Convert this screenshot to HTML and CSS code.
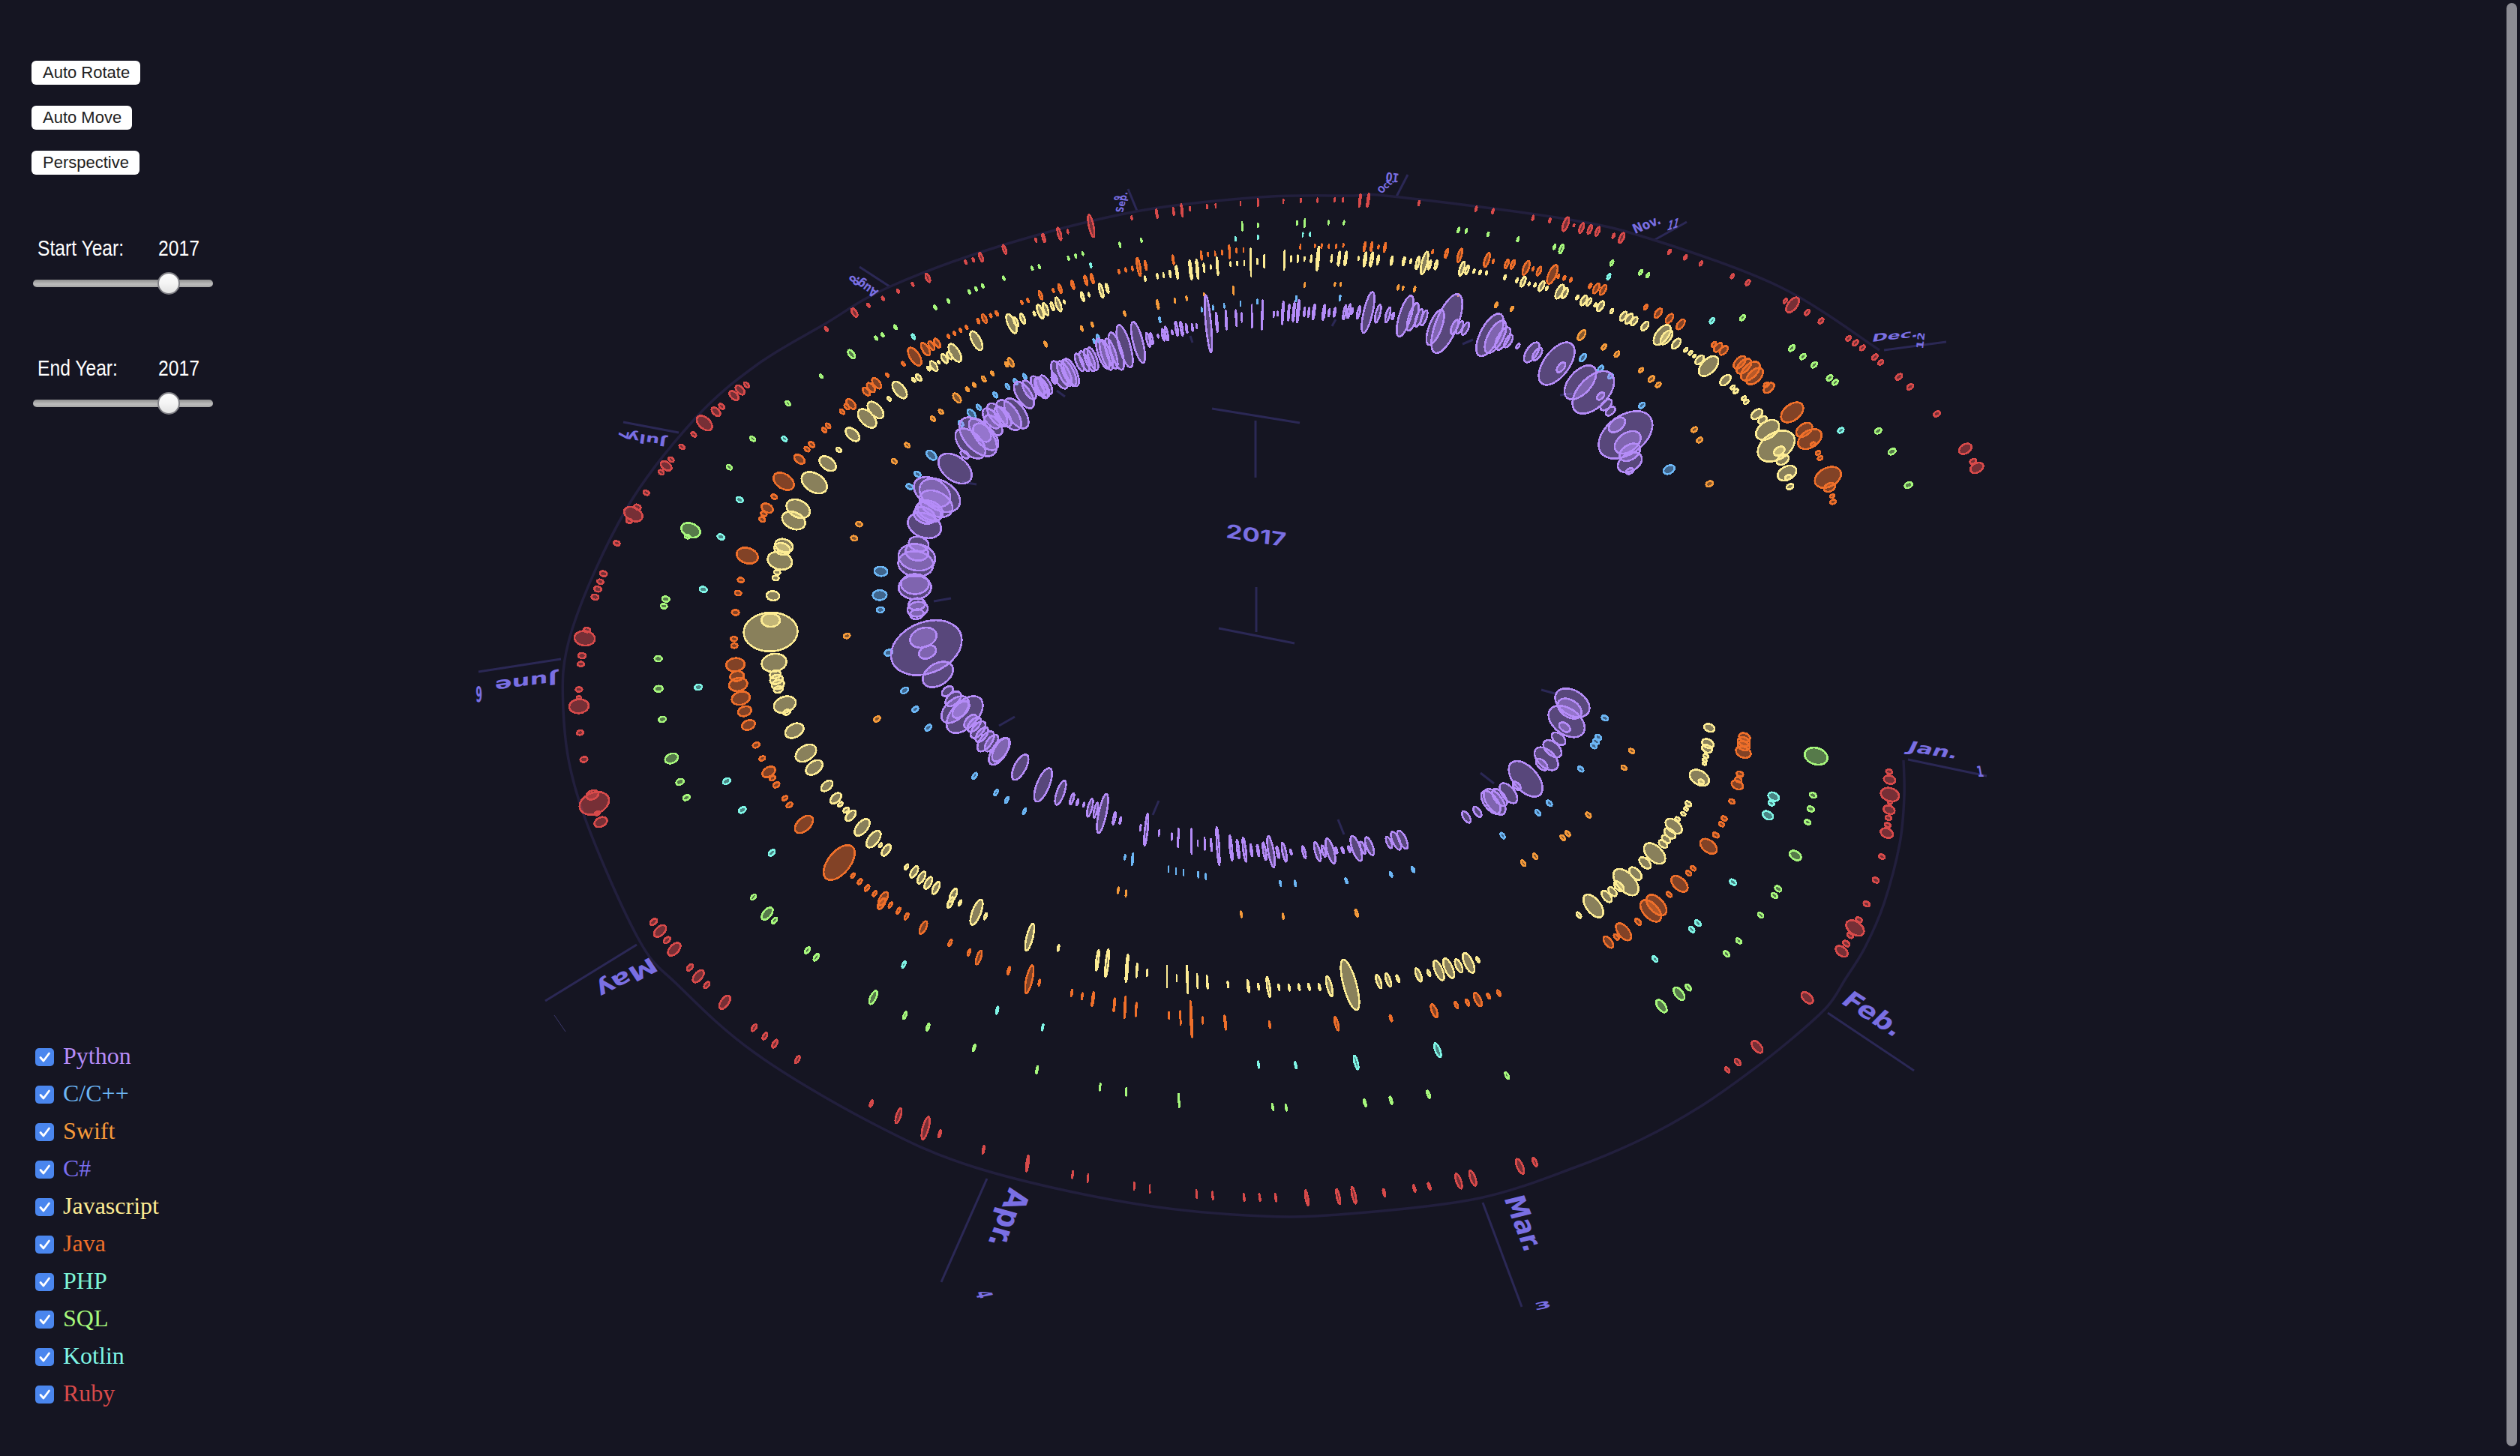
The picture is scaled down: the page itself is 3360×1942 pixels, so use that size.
FILE: index.html
```html
<!DOCTYPE html>
<html lang="en">
<head>
<meta charset="utf-8">
<title>Language activity 2017</title>
<link rel="stylesheet" href="styles.css">
</head>
<body>
<svg id="chart" class="chart" width="3360" height="1942" viewBox="0 0 3360 1942">
  <g class="ticks">
    <line x1="2544" y1="1013" x2="2649" y2="1035"/>
    <line x1="2437" y1="1351" x2="2552" y2="1428"/>
    <line x1="1977" y1="1604" x2="2029" y2="1743"/>
    <line x1="1316" y1="1572" x2="1255" y2="1710"/>
    <line x1="849" y1="1260" x2="727" y2="1335"/>
    <line x1="748" y1="879" x2="638" y2="896"/>
    <line x1="905" y1="577" x2="831" y2="563"/>
    <line x1="1186" y1="382" x2="1146" y2="356"/>
    <line x1="1516" y1="281" x2="1504" y2="252"/>
    <line x1="1862" y1="262" x2="1877" y2="233"/>
    <line x1="2206" y1="320" x2="2249" y2="296"/>
    <line x1="2512" y1="467" x2="2595" y2="456"/>
    <line x1="1616" y1="545" x2="1733" y2="564"/>
    <line x1="1674" y1="561" x2="1674" y2="637"/>
    <line x1="1675" y1="783" x2="1675" y2="843"/>
    <line x1="1625" y1="838" x2="1726" y2="858"/>
    <line x1="1587" y1="448" x2="1590" y2="457"/>
    <line x1="1409" y1="521" x2="1420" y2="529"/>
    <line x1="1781" y1="426" x2="1776" y2="435"/>
    <line x1="1950" y1="459" x2="1964" y2="453"/>
    <line x1="2080" y1="527" x2="2096" y2="525"/>
    <line x1="1283" y1="643" x2="1302" y2="646"/>
    <line x1="1245" y1="802" x2="1268" y2="798"/>
    <line x1="1332" y1="968" x2="1353" y2="956"/>
    <line x1="2055" y1="920" x2="2073" y2="925"/>
    <line x1="1974" y1="1031" x2="1992" y2="1045"/>
    <line x1="1545" y1="1068" x2="1537" y2="1087"/>
    <line x1="1784" y1="1093" x2="1792" y2="1113"/>
  </g>
  <line class="tick-edge" x1="739" y1="1354" x2="754" y2="1376"/>
  <path id="ring" class="ring" d=""/>
  <g id="blobs"></g>
  <g class="labels">
    <text class="month" transform="matrix(1.71,.26,-.5,1.07,2542,1002)">Jan.</text>
    <text class="month" transform="matrix(1.68,1.08,-1.3,1.3,2453,1337)">Feb.</text>
    <text class="month" transform="matrix(.655,1.7,-2,.5,2005,1598)">Mar.</text>
    <text class="month" transform="matrix(-.73,1.9,-2.2,-.6,1346,1583)">Apr.</text>
    <text class="month" transform="matrix(-1.85,.95,-.9,-1.35,868,1276)">May</text>
    <text class="month" transform="matrix(-1.87,.25,0,-1.2,743,897)">June</text>
    <text class="month" transform="matrix(-1.4,-.2,.13,-.9,889,584)">July</text>
    <text class="month" transform="matrix(-.62,-.42,.55,-.75,1172,388)">Aug.</text>
    <text class="month" transform="matrix(.15,-.62,.75,.1,1497,284)">Sep.</text>
    <text class="month" transform="matrix(.43,-.41,.5,.5,1842,259)">Oct.</text>
    <text class="month" transform="matrix(.8,-.32,.4,.9,2180,312)">Nov.</text>
    <text class="month" transform="matrix(1.39,-.16,-.2,.8,2495,456)">Dec.</text>
    <text class="month" transform="matrix(.7,0,.2,1.1,2637,1036)">1</text>
    <text class="month" transform="matrix(1.8,-.4,.2,.7,2047,1748)">3</text>
    <text class="month" transform="matrix(.3,.7,-1.6,.3,1300,1724)">4</text>
    <text class="month" transform="matrix(-.7,-.1,0,-1.6,643,916)">6</text>
    <text class="month" transform="matrix(-.2,.9,-1,-.1,826,574)">7</text>
    <text class="month" transform="matrix(-.6,.45,-.7,-.8,1138,366)">8</text>
    <text class="month" transform="matrix(.25,-.5,.75,.1,1494,268)">9</text>
    <text class="month" transform="matrix(-.7,-.1,.1,-.9,1866,232)">10</text>
    <text class="month" transform="matrix(.6,-.2,-.25,1,2222,308)">11</text>
    <text class="month" transform="matrix(.1,-.9,.7,.1,2564,466)">12</text>
    <text class="month year" transform="matrix(1.92,.3,-.12,1.42,1634,717)">2017</text>
  </g>
</svg>

<main class="panel">
  <div class="buttons">
    <button class="btn" type="button">Auto Rotate</button>
    <button class="btn" type="button">Auto Move</button>
    <button class="btn" type="button">Perspective</button>
  </div>

  <div class="sliders">
    <div class="slider-block">
      <div class="slider-row"><span class="slider-label"><span class="narrow">Start Year:</span></span><span class="narrow">2017</span></div>
      <input class="range" type="range" min="2001" max="2020" value="2016" aria-label="Start Year">
    </div>
    <div class="slider-block">
      <div class="slider-row"><span class="slider-label"><span class="narrow">End Year:</span></span><span class="narrow">2017</span></div>
      <input class="range" type="range" min="2001" max="2020" value="2016" aria-label="End Year">
    </div>
  </div>

  <ul class="legend">
    <li class="item c-py"><span class="check"><svg viewBox="0 0 24 24" class="tick"><path d="M6.5 12.5l4 4.5 7.5-10"/></svg></span>Python</li>
    <li class="item c-cc"><span class="check"><svg viewBox="0 0 24 24" class="tick"><path d="M6.5 12.5l4 4.5 7.5-10"/></svg></span>C/C++</li>
    <li class="item c-sw"><span class="check"><svg viewBox="0 0 24 24" class="tick"><path d="M6.5 12.5l4 4.5 7.5-10"/></svg></span>Swift</li>
    <li class="item c-cs"><span class="check"><svg viewBox="0 0 24 24" class="tick"><path d="M6.5 12.5l4 4.5 7.5-10"/></svg></span>C#</li>
    <li class="item c-js"><span class="check"><svg viewBox="0 0 24 24" class="tick"><path d="M6.5 12.5l4 4.5 7.5-10"/></svg></span>Javascript</li>
    <li class="item c-ja"><span class="check"><svg viewBox="0 0 24 24" class="tick"><path d="M6.5 12.5l4 4.5 7.5-10"/></svg></span>Java</li>
    <li class="item c-ph"><span class="check"><svg viewBox="0 0 24 24" class="tick"><path d="M6.5 12.5l4 4.5 7.5-10"/></svg></span>PHP</li>
    <li class="item c-sq"><span class="check"><svg viewBox="0 0 24 24" class="tick"><path d="M6.5 12.5l4 4.5 7.5-10"/></svg></span>SQL</li>
    <li class="item c-ko"><span class="check"><svg viewBox="0 0 24 24" class="tick"><path d="M6.5 12.5l4 4.5 7.5-10"/></svg></span>Kotlin</li>
    <li class="item c-ru"><span class="check"><svg viewBox="0 0 24 24" class="tick"><path d="M6.5 12.5l4 4.5 7.5-10"/></svg></span>Ruby</li>
  </ul>
</main>
<div class="scrollbar"></div>
<script src="chart.js"></script>
</body>
</html>
```
FILE: styles.css
```css
* { box-sizing: border-box; }
html, body { margin: 0; height: 100%; }
body {
  width: 3360px;
  height: 1942px;
  overflow: hidden;
  background: #151522;
  position: relative;
}
.chart { position: absolute; left: 0; top: 0; }
.ticks line { stroke: #2b2855; stroke-width: 3; }
.tick-edge { stroke: #3a3768; stroke-width: 1; }
.ring { fill: none; stroke: #221f3d; stroke-width: 3.5; }
.month {
  font-family: "DejaVu Sans", sans-serif;
  font-weight: 700;
  font-size: 18px;
  fill: #7a6fe3;
}
.year { font-family: "Inter", "DejaVu Sans", sans-serif; }
.blob {
  shape-rendering: crispEdges;
  vector-effect: non-scaling-stroke;
  stroke-width: 2.6;
}
.s-py { stroke: #b58cf8; fill: rgba(181, 140, 248, .42); }
.s-cc { stroke: #6cb6f5; fill: rgba(108, 182, 245, .5); }
.s-sw { stroke: #f59a3a; fill: rgba(245, 154, 58, .5); }
.s-js { stroke: #fdec94; fill: rgba(253, 236, 148, .5); }
.s-ja { stroke: #ef6f2a; fill: rgba(239, 111, 42, .5); }
.s-ko { stroke: #7ff5e6; fill: rgba(127, 245, 230, .5); }
.s-sq { stroke: #a6f77c; fill: rgba(166, 247, 124, .45); }
.s-ru { stroke: #d84a4a; fill: rgba(216, 74, 74, .5); }

.panel {
  position: relative;
  width: 320px;
  height: 1942px;
  display: flex;
  flex-direction: column;
  padding: 81px 0 0 42px;
}
.buttons {
  display: flex;
  flex-direction: column;
  align-items: flex-start;
  gap: 28px;
}
.btn {
  height: 32px;
  padding: 0 14px 0 15px;
  border: 0;
  border-radius: 6px;
  background: #fff;
  color: #222;
  font: 22px/32px "Liberation Sans", Arial, sans-serif;
}
.sliders {
  margin-top: 78px;
  display: flex;
  flex-direction: column;
  gap: 78px;
}
.slider-block { width: 244px; height: 82px; }
.slider-row {
  display: flex;
  padding-left: 8px;
  color: #fff;
  font: 29px/40px "Liberation Sans", sans-serif;
}
.slider-label { width: 161px; }
.narrow {
  display: inline-block;
  transform: scaleX(.85);
  transform-origin: left center;
}
.range {
  appearance: none;
  -webkit-appearance: none;
  display: block;
  width: 240px;
  height: 30px;
  margin: 12px 0 0 2px;
  padding: 0;
  background: transparent;
}
.range::-webkit-slider-runnable-track {
  height: 10px;
  border-radius: 5px;
  background: linear-gradient(#8f8f8f, #bdbdbd 60%, #a5a5a5);
}
.range::-webkit-slider-thumb {
  -webkit-appearance: none;
  width: 30px;
  height: 30px;
  margin-top: -10px;
  border-radius: 50%;
  border: 2px solid #7f7f85;
  background: linear-gradient(#fdfdfd, #f4f4f4 50%, #e2e2e2);
}
.legend {
  list-style: none;
  margin: auto 0 0 5px;
  padding: 0 0 59px;
  font: 32px/50px "Liberation Serif", "Times New Roman", serif;
}
.item {
  height: 50px;
  display: flex;
  align-items: center;
}
.check {
  width: 25px;
  height: 24px;
  margin: 4px 12px 0 0;
  border-radius: 5px;
  background: #4a86ee;
  display: block;
}
.tick { display: block; width: 100%; height: 100%; }
.tick path { fill: none; stroke: #fff; stroke-width: 2.8; stroke-linecap: round; stroke-linejoin: round; }
.c-py { color: #b58cf8; }
.c-cc { color: #6cb6f5; }
.c-sw { color: #f59a3a; }
.c-cs { color: #7b6ff0; }
.c-js { color: #fdec94; }
.c-ja { color: #ef6f2a; }
.c-ph { color: #7ff5d6; }
.c-sq { color: #a6f77c; }
.c-ko { color: #7ff5e6; }
.c-ru { color: #d84a4a; }

.scrollbar {
  position: absolute;
  left: 3342px;
  top: 4px;
  width: 14px;
  height: 1925px;
  border-radius: 7px;
  background: #8c8c94;
}
```
FILE: chart.js
```js
// Bubble data read per region: origin, axis scale, then [x, y, halfHeight] by language.
var crops = [
{o:[1390,1030],s:[3,3],d:{
py:[[72,82,48],[118,107,22],[140,120,12],[165,130,8],[190,142,36],[213,152,30],[240,165,78],[287,184,25],[311,194,14],[415,230,64],[392,222,12],[466,243,11],[517,258,13],[543,263,37],[596,276,50],[621,284,11],[649,286,24],[675,291,24],[702,296,76],[754,303,50],[782,308,38],[808,310,48],[835,312,24],[862,313,23],[888,316,35],[914,318,63],[941,320,23],[967,320,38],[994,320,11],[1046,320,24],[1100,318,38],[1125,316,23],[1152,315,50],[1175,313,12],[1201,312,12],[1227,308,12],[1255,305,50],[1281,302,24],[1308,296,36],[1386,281,23],[1414,274,36],[1440,270,36]],
cc:[[330,340,9],[360,349,24],[504,388,11],[534,395,11],[564,401,11],[623,410,11],[653,417,11],[952,445,10],[1011,445,11],[1215,434,11],[1394,409,10],[1482,389,11]],
sw:[[303,472,12],[334,485,12]]
}},
{o:[1100,220],s:[2.24,3],d:{
py:[[1145,635,115],[1170,630,38],[1198,620,38],[1228,613,32],[1245,610,18],[1275,605,45],[1306,600,58],[1340,598,10],[1352,595,8],[1367,592,45],[1385,590,32],[1400,588,38],[1413,585,45],[1432,588,18],[1445,590,18],[1460,588,30],[1490,590,30],[1505,592,15],[1522,590,18],[1552,590,28],[1565,585,28],[1110,645,8],[1097,650,15],[1080,655,18],[1065,655,28],[1050,655,28],[1037,670,8],[1020,675,28],[1010,680,24],[995,685,6],[975,695,22],[965,700,28],[935,710,82],[895,725,85],[870,745,75],[855,755,60],[840,760,60],[830,755,60],[800,775,45],[790,780,45],[775,785,40],[760,790,35],[735,830,55],[728,832,52],[715,835,50],[700,840,55],[685,850,18],[683,860,15],[660,880,38],[650,890,40],[635,885,40],[610,900,38]],
cc:[[1538,532,10],[1407,535,10],[1291,547,8],[1241,555,9],[1192,563,8],[1159,571,8],[1125,578,8],[1000,620,11],[816,695,16],[804,705,9]],
sw:[[1220,503,16],[1433,480,8],[1523,478,6],[1540,478,6],[1132,518,5],[1080,534,8],[1045,543,10],[994,559,18],[895,595,9],[798,639,9],[767,655,9],[659,717,10],[555,790,18],[542,798,9],[500,834,8]],
js:[[1555,375,28],[1535,375,28],[1513,375,14],[1472,375,48],[1452,376,14],[1432,376,7],[1412,376,14],[1392,376,11],[1372,380,38],[1312,385,25],[1291,386,10],[1272,390,55],[1252,393,9],[1231,394,7],[1211,397,8],[1172,405,36],[1152,408,7],[1132,412,17],[1112,417,38],[1092,420,38],[1051,430,26],[1031,437,14],[1011,441,8],[993,445,9],[956,455,9],[843,494,18],[825,503,28],[788,519,7],[769,527,18],[715,548,6],[697,558,28],[679,566,16],[659,577,25],[643,587,28],[625,595,8],[590,615,20],[570,628,18],[557,635,38],[452,703,38],[388,752,36],[372,763,15],[357,775,18],[340,790,5],[325,805,20],[310,815,8]],
ja:[[1548,322,6],[1527,325,7],[1505,325,7],[1483,325,8],[1463,325,6],[1420,327,8],[1250,341,7],[1229,343,8],[1208,347,26],[1186,350,8],[1165,355,8],[1144,358,7],[1124,363,17],[1040,380,18],[958,402,18],[937,408,36],[918,415,8],[898,420,7],[878,427,7],[798,455,19],[779,462,19],[740,480,17],[702,495,18],[682,503,7],[644,521,17],[606,542,7],[588,550,7],[513,594,9],[495,603,7],[476,615,18],[458,625,9],[423,650,7],[405,662,7],[387,674,7],[369,686,7],[335,713,18],[318,723,18],[300,737,25],[268,767,36],[234,796,8],[186,841,7]],
ko:[[1293,289,7],[1449,277,7],[1427,279,7],[1226,296,7],[794,402,8],[264,687,10]],
sq:[[1246,246,16],[1293,241,7],[1315,238,7],[1410,232,7],[1433,232,16],[1504,231,7],[1550,231,7],[945,302,7],[881,320,9],[770,355,6],[749,364,7],[727,373,7],[640,407,7],[619,414,7],[534,453,7],[471,484,7],[451,496,7],[431,508,7],[369,544,7],[329,570,8],[210,649,8],[172,680,7],[153,693,7],[79,757,17]],
ru:[[1293,150,15],[1241,154,7],[1369,145,7],[1421,142,7],[1471,141,7],[1522,140,7],[1547,140,7],[1167,164,7],[1141,167,7],[1090,175,7],[1066,182,25],[1041,186,14],[991,195,17],[916,212,7],[795,244,45],[725,267,7],[700,276,25],[653,292,17],[630,301,7],[536,338,18],[466,369,18],[443,380,7],[420,389,7],[307,452,17],[262,478,7],[218,505,7],[173,534,7],[130,562,7],[88,591,17],[4,657,8]]
}},
{o:[1800,220],s:[1.742,3],d:{
py:[[5,585,12],[20,590,25],[42,590,82],[65,595,36],[88,600,30],[100,605,14],[128,605,82],[146,608,55],[160,612,35],[172,612,30],[198,650,70],[225,635,118],[243,648,28],[255,650,25],[268,655,25],[325,680,85],[338,688,65],[355,695,45],[368,705,25],[390,725,10],[422,750,40],[435,757,25],[480,795,85],[490,810,20],[535,870,68],[565,910,85],[582,925,15],[595,960,22],[605,985,18],[640,1080,95],[620,1040,30],[645,1110,45],[650,1150,35],[650,1190,40],[650,1225,12]],
cc:[[541,771,15],[582,815,12],[605,845,10],[678,962,11],[741,1219,18]],
sw:[[112,490,9],[123,493,7],[150,497,10],[252,520,4],[340,560,10],[376,576,9],[538,681,20],[590,728,11],[620,757,11],[676,821,9],[700,856,12],[716,880,10],[800,1059,10],[812,1101,10],[835,1276,11]],
js:[[20,375,7],[35,378,28],[50,378,28],[65,380,18],[97,383,17],[125,385,17],[141,385,8],[157,392,25],[173,392,45],[185,400,18],[200,400,18],[260,415,28],[272,420,18],[288,425,7],[302,430,8],[317,432,7],[360,450,8],[388,462,8],[402,467,20],[416,476,6],[430,480,7],[445,485,20],[457,493,7],[487,507,28],[499,513,20],[528,530,8],[543,542,20],[555,548,15],[570,560,7],[582,565,20],[608,585,9],[635,605,18],[648,615,20],[660,625,17],[685,645,18],[725,680,40],[735,690,28],[758,715,20],[780,740,8],[791,752,8],[800,765,6],[812,780,18],[833,805,40],[872,861,21],[889,890,8],[896,905,9],[915,933,8],[920,948,9],[945,997,20],[958,1020,15],[970,1060,40],[990,1125,62],[997,1145,18],[1005,1180,20],[1015,1233,30],[1018,1250,10],[1022,1287,11]],
ja:[[34,327,18],[50,327,18],[66,328,7],[81,330,18],[192,347,7],[224,354,18],[255,362,27],[318,380,28],[333,385,7],[364,396,18],[378,398,18],[409,412,28],[425,416,7],[439,425,18],[470,438,38],[484,446,7],[498,452,8],[513,460,8],[558,484,9],[572,494,20],[588,500,20],[687,569,10],[716,593,19],[742,615,19],[768,638,20],[845,718,10],[855,730,18],[868,742,18],[905,790,25],[915,805,30],[930,825,38],[940,845,33],[967,880,10],[973,892,20],[1027,990,40],[1055,1060,28],[1068,1097,40],[1075,1117,8],[1087,1152,8],[1092,1173,8],[1110,1250,42],[1114,1290,18],[1120,1325,7],[1122,1348,9]],
ko:[[601,447,11],[841,623,11],[1140,1062,10]],
sq:[[252,261,10],[270,264,8],[321,277,8],[390,298,9],[475,328,9],[491,336,18],[608,392,11],[675,430,10],[692,441,9],[912,611,11],[1026,733,12],[1052,767,11],[1078,800,11],[1114,852,11],[1127,870,10],[1227,1064,11],[1259,1147,12],[1297,1281,12]],
ru:[[23,142,25],[42,142,27],[160,153,9],[293,175,10],[332,185,9],[425,212,9],[464,222,8],[501,237,28],[520,242,5],[538,252,20],[557,258,18],[575,266,18],[612,284,9],[631,292,20],[742,348,9],[779,370,9],[815,394,9],[888,445,9],[924,471,11],[1011,544,9],[1028,560,30],[1062,590,11],[1094,624,11],[1158,694,10],[1174,712,11],[1190,732,10],[1219,769,11],[1233,790,10],[1275,848,12],[1301,888,11],[1363,996,11],[1429,1136,21],[1447,1186,10],[1456,1212,21]]
}},
{o:[600,500],s:[1.96,2.24],d:{
py:[[1545,40,30],[1500,60,40],[1480,115,45],[1460,120,45],[1445,125,30],[1430,120,35],[1420,150,30],[1415,130,30],[1400,185,40],[1385,165,35],[1380,185,58],[1360,205,45],[1345,238,12],[1320,280,45],[1280,360,50],[1270,385,40],[1260,350,45],[1255,405,30],[1250,410,30],[1240,420,25],[1240,450,38],[1225,505,22],[1220,530,25],[1220,545,40],[1217,565,38],[1215,625,30],[1215,635,35],[1220,685,18],[1222,700,22],[1220,715,15],[1245,815,82],[1237,785,30],[1248,828,20],[1275,895,38],[1300,945,15],[1315,968,22],[1345,1015,55],[1335,1000,25],[1320,1000,40],[1360,1035,20],[1370,1045,22],[1380,1060,25],[1390,1075,22],[1400,1095,30],[1415,1100,25],[1435,1125,40],[1440,1120,35],[1490,1172,38],[1550,1225,50]],
cc:[[1502,5,8],[1478,20,8],[1457,35,8],[1425,60,8],[1382,97,8],[1363,117,14],[1335,146,8],[1258,240,14],[1222,297,8],[1201,334,8],[1126,587,14],[1123,658,15],[1125,702,8],[1146,830,9],[1188,943,9],[1216,999,8],[1250,1054,9],[1371,1198,9],[1427,1248,9],[1455,1270,9],[1501,1304,9]],
sw:[[1395,12,8],[1370,30,6],[1352,43,6],[1325,69,14],[1283,110,7],[1262,131,7],[1195,210,7],[1161,258,7],[1069,446,7],[1056,488,7],[1037,780,7],[1116,1028,8]],
js:[[1225,8,10],[1212,15,6],[1175,45,25],[1148,72,6],[1112,105,25],[1090,130,28],[1052,178,20],[1016,224,7],[987,265,22],[952,322,32],[910,400,28],[898,435,27],[873,510,20],[868,520,18],[862,555,27],[855,590,7],[851,607,7],[844,660,14],[838,733,20],[838,768,58],[847,860,27],[850,895,12],[853,910,14],[857,925,14],[858,940,10],[875,985,25],[880,1008,8],[900,1063,22],[930,1130,26],[952,1173,22],[985,1228,16],[1008,1265,16],[1020,1283,7],[1035,1300,8],[1047,1317,16],[1077,1352,25],[1107,1387,25],[1125,1405,6],[1140,1420,17],[1193,1470,8],[1213,1485,17],[1232,1502,18],[1250,1518,18],[1270,1533,18],[1315,1555,20]],
ja:[[1115,25,16],[1100,38,14],[1088,50,12],[1048,87,15],[1037,95,8],[1025,110,7],[988,152,7],[978,165,7],[945,208,8],[933,222,7],[913,252,14],[872,318,26],[847,364,7],[829,398,14],[820,415,7],[816,432,7],[777,540,24],[760,613,7],[753,652,7],[746,710,8],[742,789,7],[743,809,7],[746,866,20],[750,900,15],[753,925,20],[760,966,20],[770,1005,15],[780,1046,15],[800,1106,8],[816,1146,7],[833,1186,16],[843,1205,7],[853,1225,8],[875,1265,7],[887,1285,8],[925,1343,26],[1017,1457,52],[1053,1496,7],[1071,1514,8],[1090,1533,9],[1110,1550,8],[1132,1565,20]],
ko:[[874,191,7],[757,373,8],[708,484,8],[662,641,8],[649,933,8],[723,1214,9],[764,1300,9],[841,1428,9]],
sq:[[970,4,5],[883,85,7],[791,191,7],[730,276,7],[629,464,22],[620,483,6],[564,670,8],[559,691,7],[544,848,8],[545,938,9],[555,1029,8],[579,1146,15],[601,1216,9],[618,1263,8],[793,1560,8]],
ru:[[775,30,8],[758,45,14],[742,62,14],[710,94,8],[695,110,13],[665,144,22],[637,178,7],[606,215,7],[578,253,7],[565,272,14],[552,291,7],[513,352,7],[490,395,8],[479,416,22],[468,436,7],[436,503,7],[401,594,8],[393,618,7],[386,640,8],[379,664,8],[358,762,7],[352,787,22],[345,839,8],[342,864,7],[337,940,7],[337,965,5],[337,990,21],[340,1069,7],[350,1149,8],[372,1255,14],[377,1280,34],[385,1310,6],[394,1336,15]]
}},
{o:[1900,880],s:[1.96,2.613],d:{
py:[[385,150,50],[378,170,35],[370,215,55],[365,235,17],[349,275,22],[333,310,30],[317,345,40],[305,365,20],[263,415,62],[240,440,15],[218,465,35],[195,480,30],[182,495,45],[172,497,40],[137,530,18],[108,548,20]],
cc:[[470,203,9],[453,270,9],[447,285,9],[441,300,9],[407,381,9],[325,500,10],[295,533,10],[203,613,10]],
sw:[[540,318,8],[520,376,8],[427,541,9],[373,606,9],[360,620,9],[288,685,10],[257,709,10]],
js:[[743,237,14],[739,292,16],[737,310,14],[734,335,7],[731,350,6],[730,362,5],[717,411,28],[722,425,8],[688,502,9],[682,520,6],[675,537,7],[660,555,7],[650,580,26],[640,605,18],[630,625,14],[622,642,14],[600,675,36],[575,708,20],[550,745,22],[525,775,46],[507,790,18],[490,808,16],[475,825,20],[440,858,40],[402,890,10]],
ja:[[835,270,15],[833,285,16],[833,300,16],[832,322,20],[823,398,9],[819,418,9],[816,436,16],[802,494,8],[782,553,8],[775,573,8],[760,611,9],[741,650,26],[701,727,8],[689,744,9],[665,781,28],[638,818,9],[605,855,36],[590,875,38],[557,913,11],[519,948,30],[500,966,10],[479,984,20]],
ko:[[911,477,15],[905,500,8],[896,542,15],[805,775,10],[713,918,10],[697,940,10],[601,1043,10]],
sq:[[1022,336,30],[1014,472,9],[1008,520,9],[1000,566,8],[968,682,17],[923,798,10],[913,822,9],[877,890,9],[820,980,9],[788,1025,10],[688,1142,11],[664,1164,22],[618,1207,22]],
ru:[[1213,390,8],[1214,418,15],[1215,470,24],[1215,497,6],[1213,523,15],[1211,551,8],[1209,576,8],[1207,604,17],[1194,686,8],[1178,768,9],[1154,851,9],[1134,906,9],[1124,935,27],[1111,961,9],[1101,989,10],[1089,1016,19],[999,1178,20],[868,1349,21],[817,1402,12],[790,1429,9]]
}},
{o:[1300,1200],s:[1.96,2.8],d:{
js:[[143,140,50],[218,180,12],[320,226,38],[345,237,52],[397,256,52],[423,264,25],[450,273,12],[502,287,40],[527,293,11],[555,298,52],[581,304,25],[607,308,24],[661,317,11],[714,323,23],[741,325,11],[767,326,37],[794,327,11],[821,328,12],[847,327,12],[873,326,12],[900,326,12],[926,323,38],[980,318,94],[1055,306,25],[1080,300,25],[1105,295,13],[1159,281,25],[1186,274,12],[1212,264,37],[1238,256,37],[1264,247,25],[1290,236,37],[1314,224,10]],
ja:[[10,216,26],[88,265,14],[142,297,52],[168,310,11],[253,348,12],[280,361,12],[308,372,26],[364,393,25],[392,402,40],[421,410,25],[507,432,12],[537,441,25],[565,446,68],[595,451,12],[654,459,26],[770,467,12],[945,463,25],[1087,443,12],[1200,415,25],[1258,394,12],[1287,384,12],[1314,373,25],[1342,360,10],[1369,349,11]],
sw:[[696,55,11],[805,62,10],[997,50,13]],
ko:[[58,413,14],[177,476,12],[741,616,12],[838,618,12],[996,608,26],[1209,562,26]],
sq:[[162,636,14],[327,699,13],[395,718,14],[533,750,25],[778,774,12],[813,776,12],[1019,759,13],[1087,749,14],[1185,727,14],[1390,657,13]],
ru:[[22,934,15],[137,985,30],[255,1027,13],[295,1040,14],[416,1070,14],[457,1080,14],[579,1099,14],[621,1105,14],[703,1112,14],[744,1112,13],[786,1113,14],[867,1113,28],[949,1109,28],[990,1104,31],[1069,1094,14],[1148,1078,13],[1187,1070,13],[1264,1051,28],[1301,1040,28],[1424,996,28],[1463,980,16]]
}},
{o:[700,1200],s:[1.96,2.8],d:{
ru:[[336,83,12],[353,117,22],[371,151,12],[390,185,24],[431,253,12],[453,286,23],[475,319,12],[522,383,25],[599,478,13],[627,509,13],[653,538,15],[712,597,14],[905,761,13],[976,807,28],[1047,853,42],[1084,874,14]],
sq:[[633,52,23],[652,78,11],[738,189,12],[761,215,13],[910,365,25],[993,432,14],[1053,476,13],[1174,553,13]],
ko:[[990,242,12]],
ja:[[932,15,20],[955,20,10],[976,41,11],[997,62,12],[1041,104,24],[1111,161,13],[1160,197,12]],
js:[[1112,10,20],[1137,12,10],[1180,47,47],[1203,62,12]]
}}
];

var NS = "http://www.w3.org/2000/svg";
var layer = document.getElementById("blobs");
var order = ["ru","sq","ko","ja","js","sw","cc","py"];
var centerY = {py:780, cc:790, sw:800, js:830, ja:850, ko:860, sq:870, ru:900};
var items = {};
order.forEach(function (k) { items[k] = []; });

crops.forEach(function (c) {
  Object.keys(c.d).forEach(function (k) {
    c.d[k].forEach(function (p) {
      items[k].push([c.o[0] + p[0] / c.s[0], c.o[1] + p[1] / c.s[1], p[2] / c.s[1]]);
    });
  });
});

function shape(x, y, h, cy) {
  var cx = 1680 - (y - 350) * 120 / 950;
  var t = Math.atan2((y - cy) / 700, (x - cx) / 890);
  var ux = Math.cos(t), uy = Math.sin(t) * 0.74, vy = 0.72;
  var r = h / Math.sqrt(uy * uy + vy * vy);
  return [ux * r, uy * r, 0, vy * r, x, y];
}

order.forEach(function (k) {
  items[k].sort(function (a, b) { return a[2] - b[2]; });
  items[k].forEach(function (p) {
    var e = document.createElementNS(NS, "circle");
    e.setAttribute("r", "1");
    e.setAttribute("class", "blob s-" + k);
    e.setAttribute("transform", "matrix(" + shape(p[0], p[1], p[2], centerY[k]).map(function (n) { return n.toFixed(2); }).join(",") + ")");
    layer.appendChild(e);
  });
});

// Outer ring: a smooth curve through sampled points (Catmull-Rom to Bezier).
var pts = [[2538,1014],[2539,1062],[2533,1125],[2512,1205],[2487,1263],[2461,1305],[2436,1343],[2385,1389],[2334,1429],[2267,1476],[2190,1519],[2100,1557],[1973,1598],[1810,1618],[1683,1622],[1504,1604],[1300,1557],[1159,1496],[1006,1404],[905,1315],[850,1250],[773,1071],[751,946],[763,839],[835,679],[927,558],[1010,486],[1100,432],[1185,383],[1337,327],[1515,282],[1680,263],[1800,261],[1857,262],[2087,292],[2205,320],[2374,383],[2506,467]];
var d = "M" + pts[0].join(" ");
for (var i = 0; i < pts.length - 1; i++) {
  var p0 = pts[Math.max(i - 1, 0)], p1 = pts[i], p2 = pts[i + 1], p3 = pts[Math.min(i + 2, pts.length - 1)];
  d += "C" + (p1[0] + (p2[0] - p0[0]) / 6).toFixed(1) + " " + (p1[1] + (p2[1] - p0[1]) / 6).toFixed(1) + " " +
       (p2[0] - (p3[0] - p1[0]) / 6).toFixed(1) + " " + (p2[1] - (p3[1] - p1[1]) / 6).toFixed(1) + " " + p2[0] + " " + p2[1];
}
document.getElementById("ring").setAttribute("d", d);
```
